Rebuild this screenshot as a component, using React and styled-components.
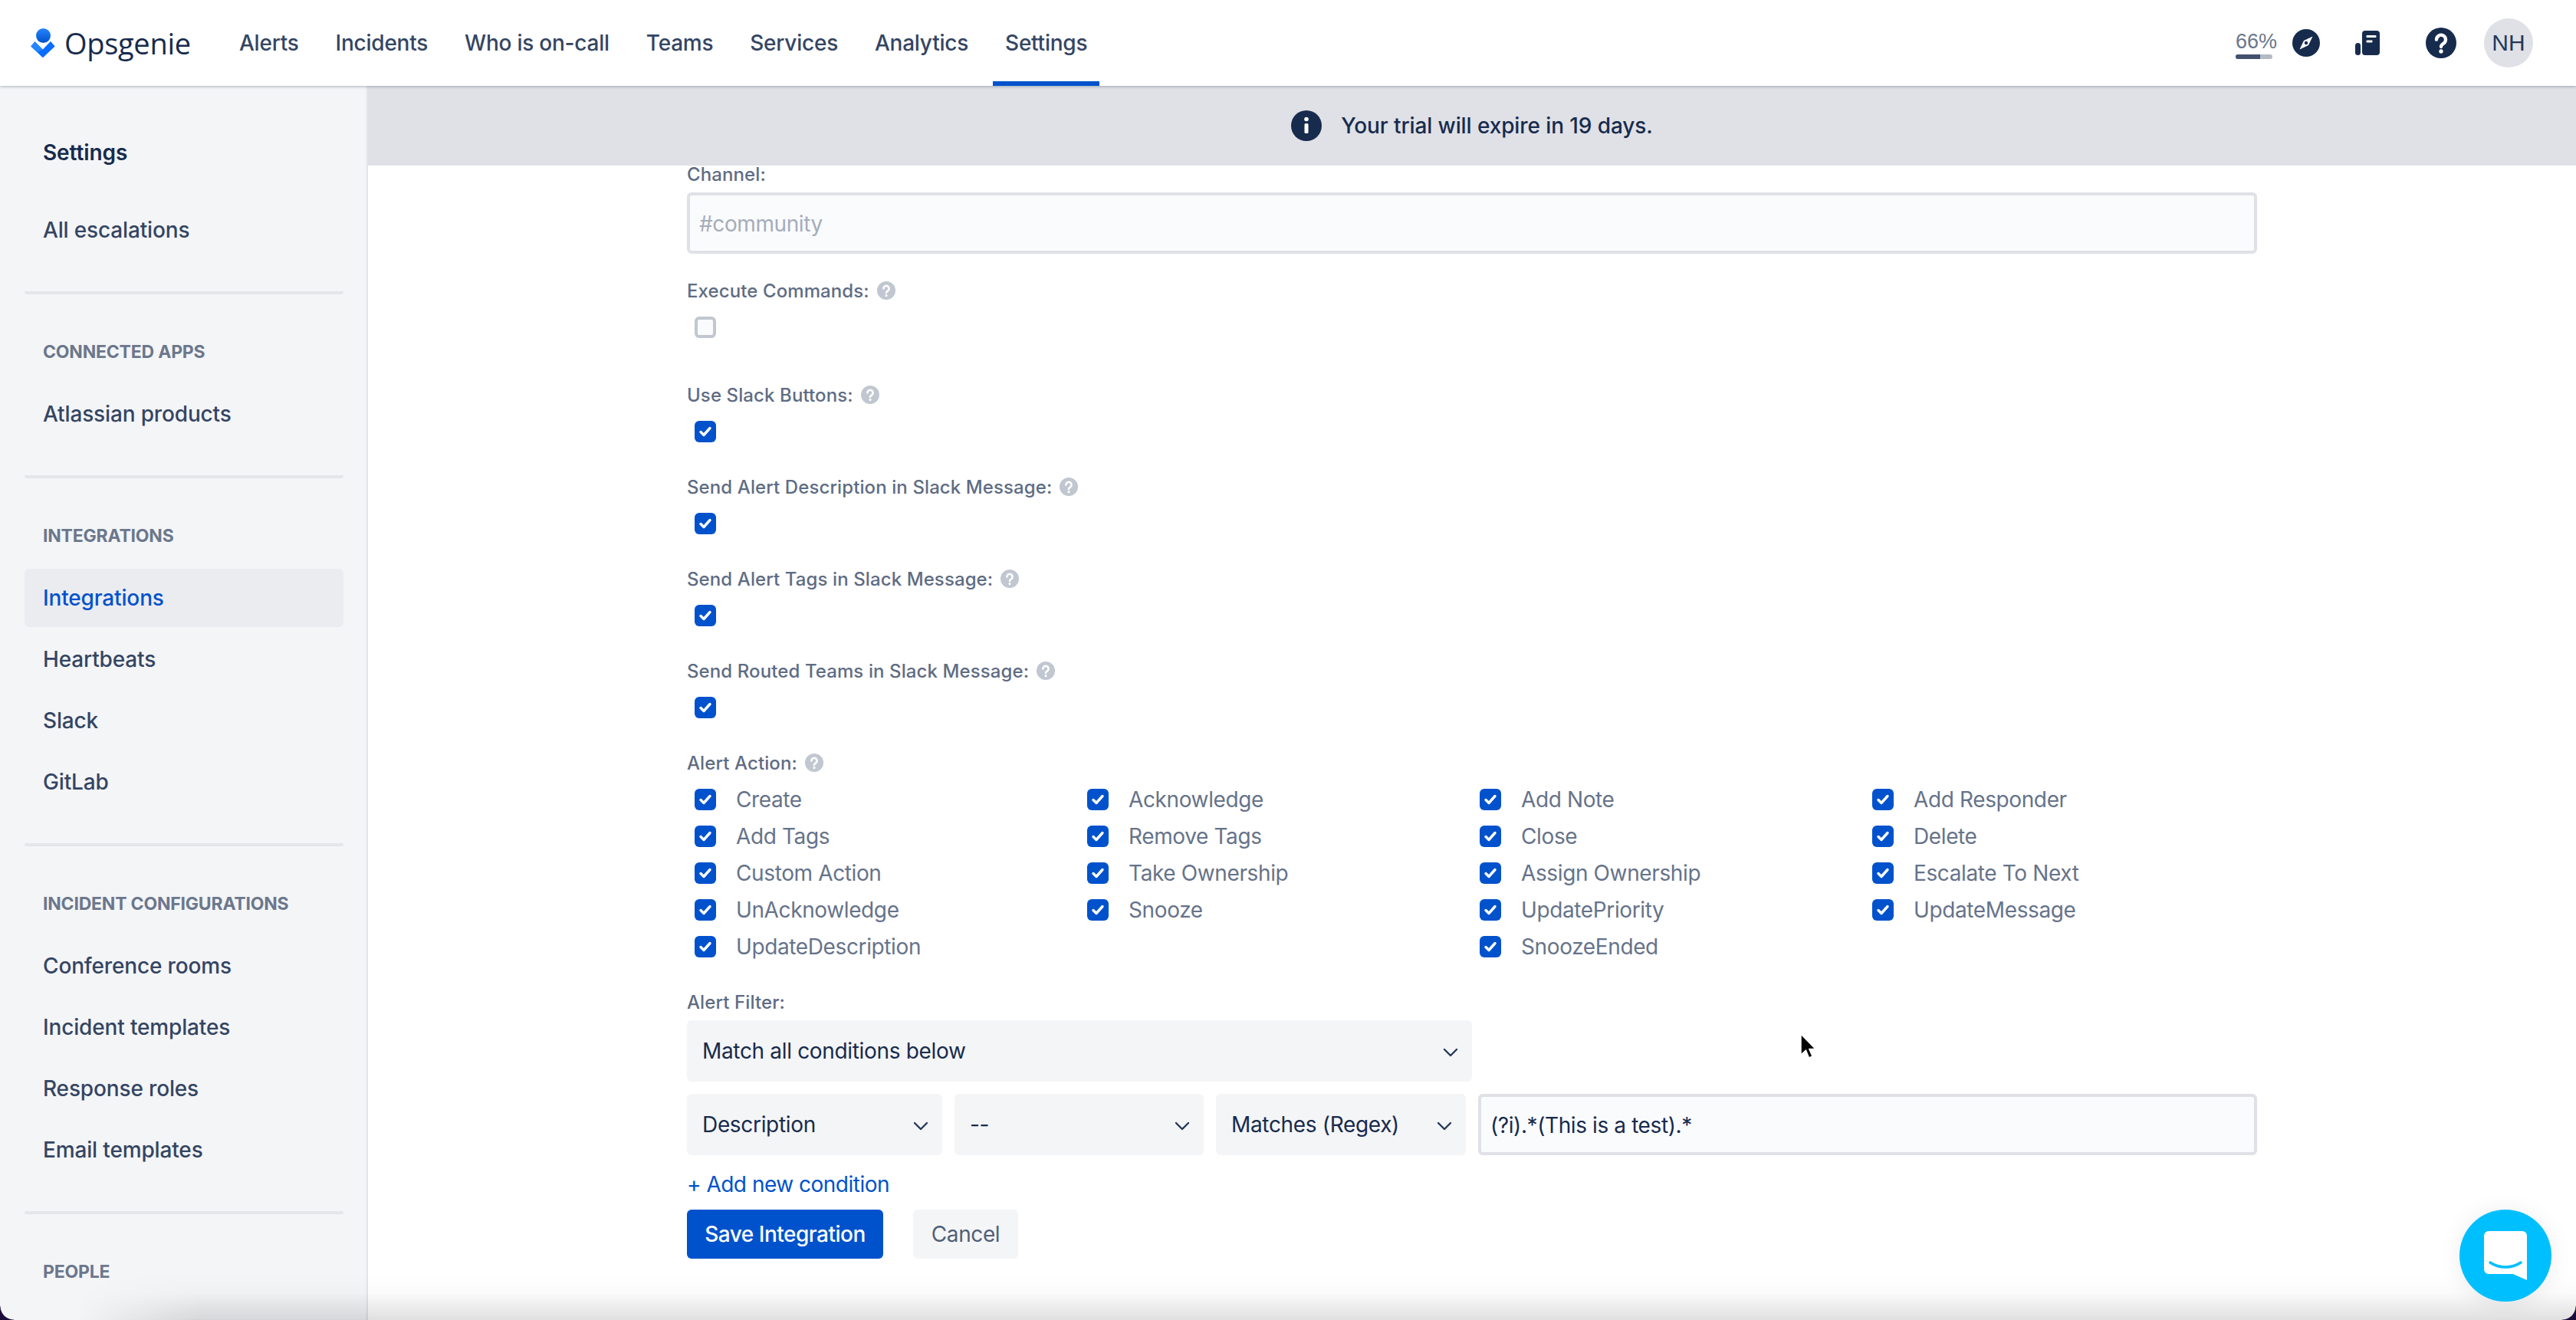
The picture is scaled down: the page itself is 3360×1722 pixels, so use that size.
import React from "react";
import styled, { createGlobalStyle } from "styled-components";

const Global = createGlobalStyle`
  html, body { margin: 0; padding: 0; background: #fff; }
  * { box-sizing: border-box; }
  body { font-family: Inter, "Liberation Sans", sans-serif; -webkit-font-smoothing: antialiased; }
`;

const Page = styled.div`
  position: relative;
  width: 3360px;
  height: 1722px;
  overflow: hidden;
  display: flex;
  flex-direction: column;
  background: #fff;
`;

const TopBar = styled.header`
  position: relative;
  z-index: 2;
  flex: 0 0 112px;
  display: flex;
  align-items: center;
  padding: 0 56px 0 40px;
  background: #fff;
  box-shadow: 0 1px 4px rgba(9, 30, 66, 0.3);
`;

const Logo = styled.div`
  flex: 0 0 256px;
  display: flex;
  align-items: center;
  gap: 12px;
  height: 112px;
`;

const LogoWord = styled.span`
  font-family: "Open Sans", sans-serif;
  font-size: 38px;
  font-weight: 400;
  letter-spacing: -0.3px;
  color: #172b4d;
`;

const Nav = styled.nav`
  display: flex;
  gap: 16px;
  height: 112px;
`;

const NavItem = styled.a`
  display: flex;
  align-items: center;
  padding: 0 16px;
  font-size: 28px;
  font-weight: 500;
  letter-spacing: -0.24px;
  color: #344563;
  border-bottom: 6px solid ${(p) => (p.$active ? "#0052cc" : "transparent")};
  border-top: 6px solid transparent;
`;

const Tools = styled.div`
  margin-left: auto;
  display: flex;
  align-items: center;
`;

const Usage = styled.div`
  display: flex;
  flex-direction: column;
  width: 53px;
  gap: 2px;
  margin-top: 4px;
`;

const UsageText = styled.span`
  font-family: "Liberation Sans", sans-serif;
  font-size: 27px;
  line-height: 30px;
  color: #6b778c;
  white-space: nowrap;
`;

const UsageTrack = styled.div`
  width: 48px;
  height: 6px;
  border-radius: 3px;
  background: #b3bac5;
  overflow: hidden;
`;

const UsageFill = styled.div`
  height: 100%;
  background: #42526e;
`;

const ToolIcon = styled.div`
  display: flex;
  margin-left: ${(p) => p.$gap}px;
`;

const Avatar = styled.div`
  width: 64px;
  height: 64px;
  margin-left: 36px;
  border-radius: 50%;
  background: #dfe1e6;
  display: flex;
  align-items: center;
  justify-content: center;
  font-family: "Liberation Sans", sans-serif;
  font-size: 30px;
  color: #253858;
`;

const Body = styled.div`
  flex: 1;
  min-height: 0;
  display: flex;
`;

const Sidebar = styled.aside`
  flex: 0 0 480px;
  padding: 48px 32px 0;
  background: #f4f5f7;
  overflow: hidden;
  box-shadow: inset -3px 0 2px -1px rgba(9, 30, 66, 0.08);
`;

const SideTitle = styled.div`
  height: 76px;
  display: flex;
  align-items: center;
  padding: 1px 0 0 24px;
  margin-bottom: 26px;
  font-size: 28px;
  font-weight: 600;
  letter-spacing: -0.1px;
  color: #172b4d;
`;

const SideGroup = styled.div`
  display: flex;
  flex-direction: column;
  gap: 4px;
`;

const SideItem = styled.a`
  height: 76px;
  display: flex;
  align-items: center;
  padding-left: 24px;
  border-radius: 6px;
  font-size: 28px;
  font-weight: 500;
  letter-spacing: -0.15px;
  color: ${(p) => (p.$active ? "#0052cc" : "#344563")};
  background: ${(p) => (p.$active ? "#ebecf0" : "transparent")};
`;

const SideDivider = styled.div`
  height: 4px;
  margin: 42px 0 59px;
  border-radius: 2px;
  background: #e4e6ea;
`;

const SideHeading = styled.div`
  height: 32px;
  line-height: 32px;
  padding-left: 24px;
  margin-bottom: 27px;
  font-size: 23px;
  font-weight: 700;
  letter-spacing: -0.2px;
  color: #6b778c;
  white-space: nowrap;
`;

const Main = styled.main`
  flex: 1;
  min-width: 0;
  display: flex;
  flex-direction: column;
`;

const Banner = styled.div`
  flex: 0 0 104px;
  display: flex;
  align-items: center;
  justify-content: center;
  gap: 25px;
  background: #dfe1e6;
  font-size: 28px;
  font-weight: 500;
  letter-spacing: -0.1px;
  color: #172b4d;
`;

const Form = styled.form`
  width: 2048px;
  margin: 0 auto;
`;

const Label = styled.div`
  display: flex;
  align-items: center;
  gap: 10px;
  height: 22px;
  margin-top: ${(p) => p.$top || 0}px;
  font-size: 24px;
  font-weight: 500;
  letter-spacing: 0.1px;
  color: #5e6c84;
`;

const TextBox = styled.div`
  height: 80px;
  display: flex;
  align-items: center;
  padding: 1px 12px 0;
  border: 4px solid #dfe1e6;
  border-radius: 6px;
  background: #fafbfc;
  font-size: 28px;
  letter-spacing: -0.4px;
  color: ${(p) => (p.$placeholder ? "#a5adba" : "#172b4d")};
  flex: ${(p) => (p.$fill ? 1 : "none")};
  margin-top: ${(p) => p.$top || 0}px;
`;

const Box = styled.span`
  flex: none;
  display: flex;
  width: 28px;
  height: 28px;
  border-radius: 6px;
  background: ${(p) => (p.$checked ? "#0052cc" : "#fafbfc")};
  border: ${(p) => (p.$checked ? "none" : "4px solid #c1c7d0")};
`;

const SingleCheck = styled.div`
  display: flex;
  padding-left: 10px;
  margin-top: 23px;
`;

const ActionGrid = styled.div`
  display: grid;
  grid-template-columns: repeat(4, 512px);
  grid-auto-rows: 48px;
  padding-left: 10px;
  margin-top: 13px;
`;

const Action = styled.label`
  display: flex;
  align-items: center;
  gap: 26px;
  font-size: 28px;
  letter-spacing: -0.38px;
  color: #66738a;
`;

const Select = styled.div`
  height: 80px;
  width: ${(p) => p.$width}px;
  flex: none;
  display: flex;
  align-items: center;
  justify-content: space-between;
  padding: 0 18px 0 20px;
  border-radius: 6px;
  background: #f4f5f7;
  font-size: 28px;
  letter-spacing: -0.33px;
  color: #172b4d;
  margin-top: ${(p) => p.$top || 0}px;
`;

const FilterRow = styled.div`
  display: flex;
  gap: 16px;
  margin-top: 16px;
`;

const AddLink = styled.a`
  display: block;
  height: 34px;
  line-height: 34px;
  margin-top: 21px;
  font-size: 28px;
  letter-spacing: -0.5px;
  color: #0052cc;
`;

const Actions = styled.div`
  display: flex;
  gap: 39px;
  margin-top: 16px;
`;

const Btn = styled.button`
  height: 64px;
  width: ${(p) => p.$width}px;
  padding: 0;
  border: 0;
  border-radius: 6px;
  font-family: inherit;
  font-size: 28px;
  font-weight: ${(p) => (p.$primary ? 500 : 400)};
  letter-spacing: ${(p) => (p.$primary ? -0.5 : -0.4)}px;
  color: ${(p) => (p.$primary ? "#fff" : "#505f79")};
  background: ${(p) => (p.$primary ? "#0052cc" : "#f4f5f7")};
`;

const BottomFade = styled.div`
  position: absolute;
  left: 0;
  right: 0;
  bottom: 0;
  height: 60px;
  z-index: 3;
  pointer-events: none;
  background: linear-gradient(to bottom, rgba(0, 0, 0, 0), rgba(0, 0, 0, 0.015) 40%, rgba(0, 0, 0, 0.12));
  -webkit-mask-image: linear-gradient(to right, transparent 100px, #000 260px);
`;

const Corner = styled.div`
  position: absolute;
  bottom: 0;
  ${(p) => p.$side}: 0;
  width: 18px;
  height: 18px;
  z-index: 4;
  background: radial-gradient(
    circle at ${(p) => (p.$side === "left" ? "top right" : "top left")},
    transparent 17px,
    #1b0c3c 18px
  );
`;

const ChatBubble = styled.div`
  position: absolute;
  left: 3208px;
  top: 1578px;
  width: 120px;
  height: 120px;
  z-index: 5;
  border-radius: 50%;
  background: #00bfff;
  display: flex;
  align-items: center;
  justify-content: center;
  box-shadow: 0 2px 30px rgba(0, 0, 0, 0.08);
`;

const Cursor = styled.svg`
  position: absolute;
  left: 2345px;
  top: 1346px;
  z-index: 5;
`;

const Help = ({ size = 24, bg = "#c1c7d0" }) => (
  <svg width={size} height={size} viewBox="0 0 24 24">
    <circle cx="12" cy="12" r="12" fill={bg} />
    <path d="M8.4 9.4a3.6 3.6 0 1 1 5.6 3c-1.3.8-2 1.3-2 2.6" fill="none" stroke="#fff" strokeWidth="2.6" strokeLinecap="round" />
    <circle cx="12" cy="18.6" r="1.6" fill="#fff" />
  </svg>
);

const Chevron = () => (
  <svg width="20" height="12" viewBox="0 0 20 12" style={{ marginTop: 4 }}>
    <path d="M2 2l8 8 8-8" fill="none" stroke="#253858" strokeWidth="2.4" strokeLinecap="round" strokeLinejoin="round" />
  </svg>
);

const Check = ({ on = true }) => (
  <Box $checked={on}>
    {on && (
      <svg width="28" height="28" viewBox="0 0 28 28">
        <path d="M8 14.5l4 4 8-9" fill="none" stroke="#fff" strokeWidth="3.4" strokeLinecap="round" strokeLinejoin="round" />
      </svg>
    )}
  </Box>
);

const actions = [
  "Create", "Acknowledge", "Add Note", "Add Responder",
  "Add Tags", "Remove Tags", "Close", "Delete",
  "Custom Action", "Take Ownership", "Assign Ownership", "Escalate To Next",
  "UnAcknowledge", "Snooze", "UpdatePriority", "UpdateMessage",
  "UpdateDescription", null, "SnoozeEnded", null,
];

const navItems = ["Alerts", "Incidents", "Who is on-call", "Teams", "Services", "Analytics", "Settings"];

const sideSections = [
  { title: "CONNECTED APPS", items: ["Atlassian products"] },
  { title: "INTEGRATIONS", items: ["Integrations", "Heartbeats", "Slack", "GitLab"] },
  { title: "INCIDENT CONFIGURATIONS", items: ["Conference rooms", "Incident templates", "Response roles", "Email templates"] },
];

const toggles = [
  { label: "Use Slack Buttons:", top: 63 },
  { label: "Send Alert Description in Slack Message:", top: 47 },
  { label: "Send Alert Tags in Slack Message:", top: 47 },
  { label: "Send Routed Teams in Slack Message:", top: 47 },
];

export default function App() {
  return (
    <Page>
      <Global />
      <TopBar>
        <Logo>
          <svg width="32" height="38" viewBox="0 0 32 38">
            <defs>
              <linearGradient id="head" x1="0" y1="0" x2="0" y2="1">
                <stop offset="0" stopColor="#2684ff" />
                <stop offset="1" stopColor="#0052cc" />
              </linearGradient>
            </defs>
            <circle cx="16.5" cy="9.5" r="9.5" fill="url(#head)" />
            <path d="M0 23.5L5.5 17 16 27.5 26 17l5.5 6.5L16.500 37.500a1 1 0 0 1-1.400 0z" fill="#2684ff" />
            <path d="M16 27.500L26 17l5.500 6.500-15 14a1 1 0 0 1-1.400 0L9 31z" fill="#0065ff" opacity="0.75" />
          </svg>
          <LogoWord>Opsgenie</LogoWord>
        </Logo>
        <Nav>
          {navItems.map((n) => (
            <NavItem key={n} $active={n === "Settings"}>{n}</NavItem>
          ))}
        </Nav>
        <Tools>
          <Usage>
            <UsageText>66%</UsageText>
            <UsageTrack><UsageFill style={{ width: "66%" }} /></UsageTrack>
          </Usage>
          <ToolIcon $gap={21}>
            <svg width="36" height="36" viewBox="0 0 36 36">
              <circle cx="18" cy="18" r="18" fill="#172b4d" />
              <path d="M26.500 9.500L21 21 9.500 26.500 15 15z" fill="#fff" />
              <circle cx="18" cy="18" r="2.200" fill="#172b4d" />
            </svg>
          </ToolIcon>
          <ToolIcon $gap={46}>
            <svg width="32" height="36" viewBox="0 0 32 36">
              <rect x="9" y="2" width="23" height="32" rx="4" fill="#172b4d" />
              <rect x="0" y="18" width="7" height="16" rx="3.500" fill="#172b4d" />
              <rect x="14.500" y="8" width="13" height="3" rx="1" fill="#fff" />
              <rect x="14.500" y="14.500" width="8" height="3" rx="1" fill="#fff" />
            </svg>
          </ToolIcon>
          <ToolIcon $gap={60}><Help size={40} bg="#172b4d" /></ToolIcon>
          <Avatar>NH</Avatar>
        </Tools>
      </TopBar>
      <Body>
        <Sidebar>
          <SideTitle>Settings</SideTitle>
          <SideGroup>
            <SideItem>All escalations</SideItem>
          </SideGroup>
          {sideSections.map((s) => (
            <React.Fragment key={s.title}>
              <SideDivider />
              <SideHeading>{s.title}</SideHeading>
              <SideGroup>
                {s.items.map((i) => (
                  <SideItem key={i} $active={i === "Integrations"}>{i}</SideItem>
                ))}
              </SideGroup>
            </React.Fragment>
          ))}
          <SideDivider />
          <SideHeading>PEOPLE</SideHeading>
        </Sidebar>
        <Main>
          <Banner>
            <svg width="40" height="40" viewBox="0 0 40 40">
              <circle cx="20" cy="20" r="20" fill="#172b4d" />
              <rect x="17.500" y="17" width="5" height="13" rx="1.500" fill="#fff" />
              <circle cx="20" cy="11.500" r="2.800" fill="#fff" />
            </svg>
            <span>Your trial will expire in 19 days.</span>
          </Banner>
          <Form>
            <Label>Channel:</Label>
            <TextBox $placeholder $top={13}>#community</TextBox>
            <Label $top={37}>Execute Commands: <Help /></Label>
            <SingleCheck><Check on={false} /></SingleCheck>
            {toggles.map((t) => (
              <React.Fragment key={t.label}>
                <Label $top={t.top}>{t.label} <Help /></Label>
                <SingleCheck><Check /></SingleCheck>
              </React.Fragment>
            ))}
            <Label $top={47}>Alert Action: <Help /></Label>
            <ActionGrid>
              {actions.map((a, i) =>
                a ? (
                  <Action key={a}><Check />{a}</Action>
                ) : (
                  <span key={i} />
                )
              )}
            </ActionGrid>
            <Label $top={37}>Alert Filter:</Label>
            <Select $width={1024} $top={13}>Match all conditions below<Chevron /></Select>
            <FilterRow>
              <Select $width={333}>Description<Chevron /></Select>
              <Select $width={325}>--<Chevron /></Select>
              <Select $width={326}>Matches (Regex)<Chevron /></Select>
              <TextBox $fill>(?i).*(This is a test).*</TextBox>
            </FilterRow>
            <AddLink>+ Add new condition</AddLink>
            <Actions>
              <Btn type="button" $primary $width={256}>Save Integration</Btn>
              <Btn type="button" $width={137}>Cancel</Btn>
            </Actions>
          </Form>
        </Main>
      </Body>
      <BottomFade />
      <Corner $side="left" />
      <Corner $side="right" />
      <Cursor width="26" height="40" viewBox="0 0 26 40">
        <path d="M4 3v27l6.500-6 4 10 4.500-2-4.200-9.500H23z" fill="#000" stroke="#fff" strokeWidth="1.500" strokeLinejoin="round" />
      </Cursor>
      <ChatBubble>
        <svg width="56" height="64" viewBox="0 0 56 64">
          <path d="M6 0h44a6 6 0 0 1 6 6v58L38 56H6a6 6 0 0 1-6-6V6a6 6 0 0 1 6-6z" fill="#fff" />
          <path d="M8 41c12 8 28 8 40 0" fill="none" stroke="#00bfff" strokeWidth="3.500" strokeLinecap="round" />
        </svg>
      </ChatBubble>
    </Page>
  );
}
